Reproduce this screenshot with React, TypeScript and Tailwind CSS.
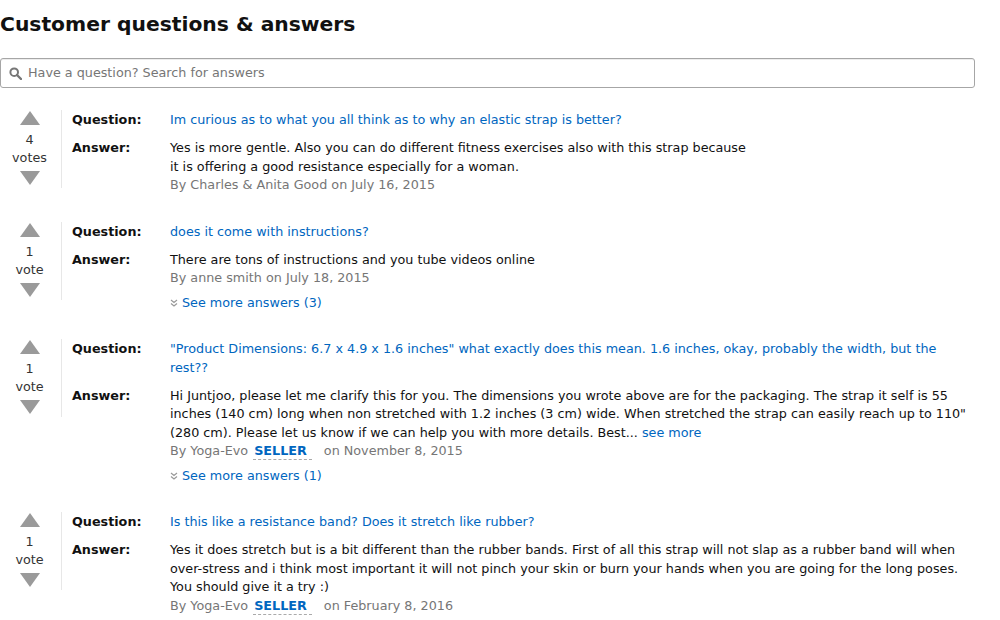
const font = { fontFamily: '"DejaVu Sans", Verdana, sans-serif' };

type QA = {
  votes: number;
  question: string;
  answer: React.ReactNode;
  by: string;
  seller?: boolean;
  date: string;
  more?: number;
};

const items: QA[] = [
  {
    votes: 4,
    question: 'Im curious as to what you all think as to why an elastic strap is better?',
    answer: (
      <>
        Yes is more gentle. Also you can do different fitness exercises also with this strap because
        <br />
        it is offering a good resistance especially for a woman.
      </>
    ),
    by: 'Charles & Anita Good',
    date: 'July 16, 2015',
  },
  {
    votes: 1,
    question: 'does it come with instructions?',
    answer: 'There are tons of instructions and you tube videos online',
    by: 'anne smith',
    date: 'July 18, 2015',
    more: 3,
  },
  {
    votes: 1,
    question:
      '"Product Dimensions: 6.7 x 4.9 x 1.6 inches" what exactly does this mean. 1.6 inches, okay, probably the width, but the rest??',
    answer: (
      <>
        Hi Juntjoo, please let me clarify this for you. The dimensions you wrote above are for the packaging. The strap it self is 55
        inches (140 cm) long when non stretched with 1.2 inches (3 cm) wide. When stretched the strap can easily reach up to 110"
        (280 cm). Please let us know if we can help you with more details. Best...{' '}
        <a className="text-[#0066c0]">see more</a>
      </>
    ),
    by: 'Yoga-Evo',
    seller: true,
    date: 'November 8, 2015',
    more: 1,
  },
  {
    votes: 1,
    question: 'Is this like a resistance band? Does it stretch like rubber?',
    answer:
      'Yes it does stretch but is a bit different than the rubber bands. First of all this strap will not slap as a rubber band will when over-stress and i think most important it will not pinch your skin or burn your hands when you are going for the long poses. You should give it a try :)',
    by: 'Yoga-Evo',
    seller: true,
    date: 'February 8, 2016',
  },
];

const Up = () => (
  <svg width="20" height="14" viewBox="0 0 20 14">
    <path d="M10 0 L20 14 L0 14 Z" fill="#9a9a9a" />
  </svg>
);

const Down = () => (
  <svg width="20" height="14" viewBox="0 0 20 14">
    <path d="M0 0 L20 0 L10 14 Z" fill="#9a9a9a" />
  </svg>
);

const Chevrons = () => (
  <svg width="8" height="8" viewBox="0 0 8 8" className="mr-[4px]">
    <path d="M1 1 L4 3.5 L7 1 M1 4.5 L4 7 L7 4.5" fill="none" stroke="#999" strokeWidth="1.2" />
  </svg>
);

export default function App() {
  return (
    <div className="bg-white w-[1000px] h-[620px] overflow-hidden text-[#111] text-[12.75px] leading-[18.5px]" style={font}>
      <div className="w-[975px]">
        <h2 className="text-[20.3px] font-bold leading-[24px] pt-[12px] text-[#111]">Customer questions &amp; answers</h2>

        <div className="mt-[22px] w-[975px] h-[30px] border border-[#a6a6a6] rounded-[3px] flex items-center pl-[8px] gap-[6px] shadow-[inset_0_1px_0_rgba(0,0,0,.07)]">
          <svg width="13" height="13" viewBox="0 0 13 13">
            <circle cx="5.2" cy="5.2" r="3.8" fill="none" stroke="#777" strokeWidth="2" />
            <path d="M8 8 L12 12" stroke="#777" strokeWidth="2.4" strokeLinecap="round" />
          </svg>
          <span className="text-[#767676] text-[12.75px]">Have a question? Search for answers</span>
        </div>

        <div className="mt-[22px] flex flex-col gap-[27px]">
          {items.map((it, i) => (
            <div key={i} className="flex items-start">
              <div className="w-[62px] shrink-0 flex flex-col items-center pr-[2px] border-r border-[#e7e7e7] pt-[1px] pb-[3px]">
                <Up />
                <div className="mt-[6px] mb-[4px] text-center leading-[18px] text-[#333]">
                  <div>{it.votes}</div>
                  <div>{it.votes === 1 ? 'vote' : 'votes'}</div>
                </div>
                <Down />
              </div>
              <div className="flex-1 pl-[10px] pt-[1px]">
                <div className="flex">
                  <div className="w-[98px] shrink-0 font-bold">Question:</div>
                  <div className="flex-1 text-[#0066c0]">{it.question}</div>
                </div>
                <div className="flex mt-[9.5px]">
                  <div className="w-[98px] shrink-0 font-bold">Answer:</div>
                  <div className="flex-1">
                    <div className="text-[#111]">{it.answer}</div>
                    <div className="text-[#767676]">
                      By {it.by}
                      {it.seller && (
                        <span className="inline-block ml-[5px] mr-[12px] pl-[1px] pr-[5px] font-bold text-[#0066c0] border-b border-dashed border-[#aaa] leading-[16px]">
                          SELLER
                        </span>
                      )}
                      {it.seller ? '' : ' '}on {it.date}
                    </div>
                    {it.more && (
                      <div className="mt-[6px] text-[#0066c0] flex items-center">
                        <Chevrons />
                        See more answers ({it.more})
                      </div>
                    )}
                  </div>
                </div>
              </div>
            </div>
          ))}
        </div>
      </div>
    </div>
  );
}
